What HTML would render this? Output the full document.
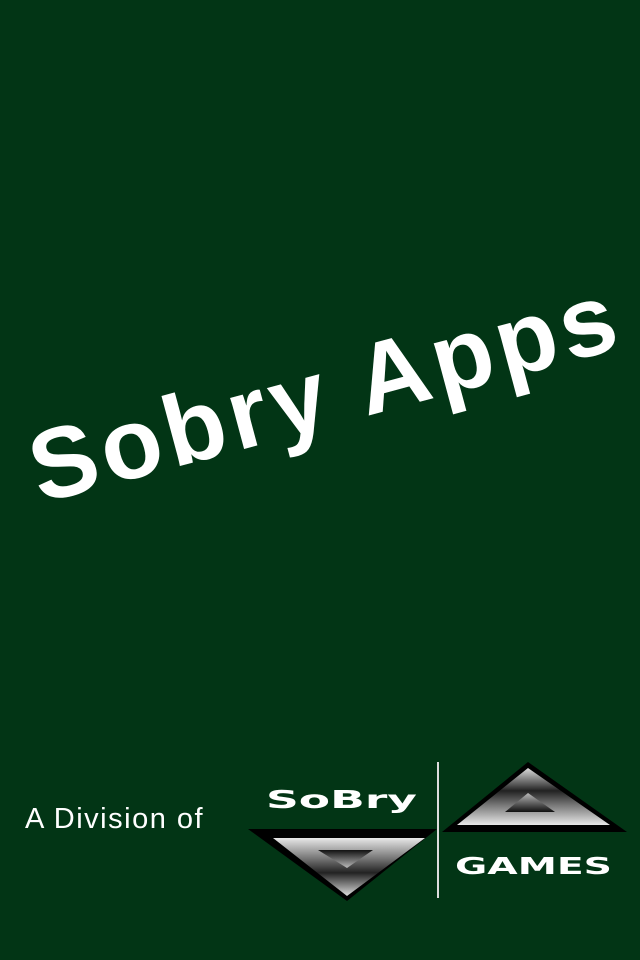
<!DOCTYPE html>
<html><head><style>
html,body{margin:0;padding:0;}
body{width:640px;height:960px;background:#023515;position:relative;overflow:hidden;font-family:"Liberation Sans",sans-serif;}
.title{position:absolute;left:325px;top:392px;transform:translate(-50%,-50%) rotate(-15deg);color:#fff;font-size:100px;font-weight:bold;letter-spacing:5px;white-space:nowrap;line-height:1;}
.div{position:absolute;left:25px;top:803px;color:#fff;font-size:29px;letter-spacing:1.5px;}
svg{position:absolute;left:0;top:0;}
</style></head><body>
<div class="title">Sobry Apps</div>
<div class="div">A Division of</div>
<svg width="640" height="960">
<defs>
<linearGradient id="g1" x1="0" y1="0" x2="0" y2="1"><stop offset="0" stop-color="#e8e8e8"/><stop offset="0.35" stop-color="#777"/><stop offset="0.6" stop-color="#222"/><stop offset="1" stop-color="#ddd"/></linearGradient>
<linearGradient id="g2" x1="0" y1="1" x2="0" y2="0"><stop offset="0" stop-color="#e8e8e8"/><stop offset="0.35" stop-color="#777"/><stop offset="0.6" stop-color="#222"/><stop offset="1" stop-color="#ddd"/></linearGradient>
<linearGradient id="g3" x1="0" y1="0" x2="0" y2="1"><stop offset="0" stop-color="#111"/><stop offset="1" stop-color="#bbb"/></linearGradient>
<linearGradient id="g4" x1="0" y1="1" x2="0" y2="0"><stop offset="0" stop-color="#111"/><stop offset="1" stop-color="#bbb"/></linearGradient>
</defs>
<polygon points="248,829 437,829 347,901" fill="#000"/>
<polygon points="273,838 425,838 347,896" fill="url(#g1)"/>
<polygon points="318,850 373,850 347,868" fill="url(#g3)"/>
<polygon points="528,762 442,832 627,832" fill="#000"/>
<polygon points="528,768 457,825 610,825" fill="url(#g2)"/>
<polygon points="528,793 505,812 555,812" fill="url(#g4)"/>
<rect x="437" y="762" width="2" height="136" fill="#ddd"/>
<text x="266" y="808" fill="#fff" font-family="DejaVu Sans,sans-serif" font-weight="bold" font-size="25" textLength="151" lengthAdjust="spacingAndGlyphs">SoBry</text>
<text x="455" y="874" fill="#fff" font-family="DejaVu Sans,sans-serif" font-weight="bold" font-size="23" textLength="157" lengthAdjust="spacingAndGlyphs">GAMES</text>
</svg>
</body></html>
